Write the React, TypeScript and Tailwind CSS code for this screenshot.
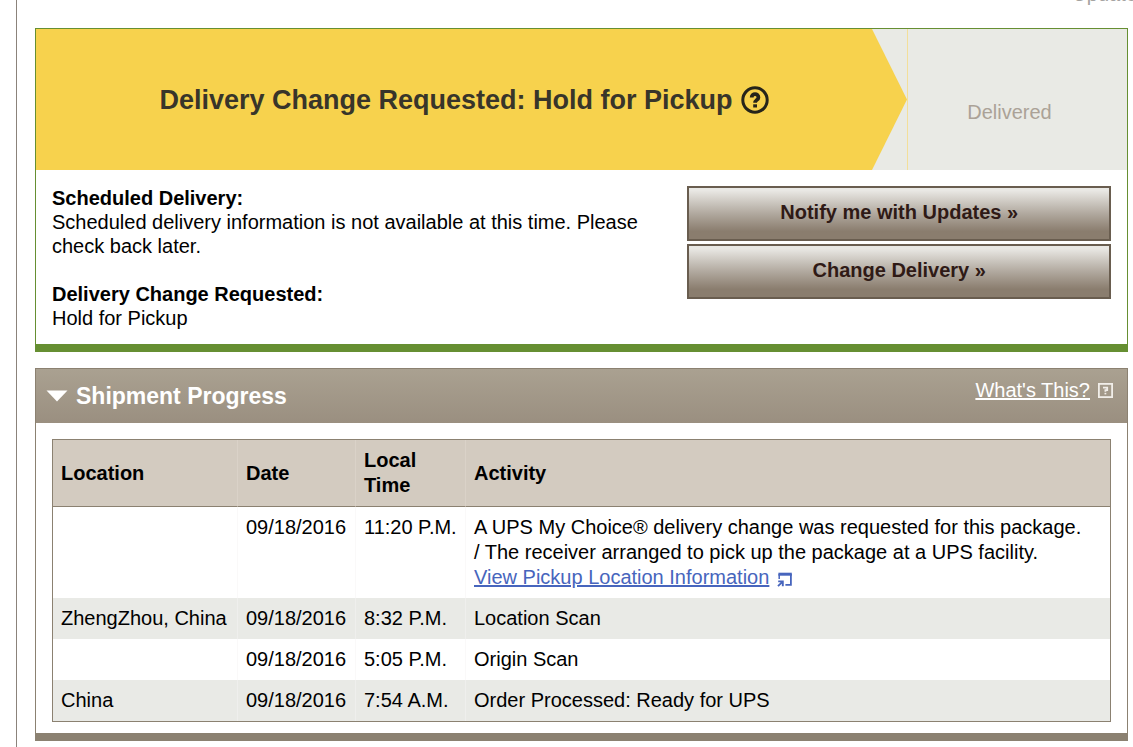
type Scan = {
  location: string;
  date: string;
  time: string;
  activity: string[];
  link?: string;
};

const scans: Scan[] = [
  {
    location: '',
    date: '09/18/2016',
    time: '11:20 P.M.',
    activity: [
      'A UPS My Choice® delivery change was requested for this package.',
      '/ The receiver arranged to pick up the package at a UPS facility.',
    ],
    link: 'View Pickup Location Information',
  },
  { location: 'ZhengZhou, China', date: '09/18/2016', time: '8:32 P.M.', activity: ['Location Scan'] },
  { location: '', date: '09/18/2016', time: '5:05 P.M.', activity: ['Origin Scan'] },
  { location: 'China', date: '09/18/2016', time: '7:54 A.M.', activity: ['Order Processed: Ready for UPS'] },
];

function HelpCircle() {
  return (
    <svg viewBox="0 0 28 28" className="size-7" fill="none" stroke="#26241a" aria-hidden="true">
      <circle cx="14" cy="14" r="12.2" strokeWidth="3" />
      <path d="M10.7 11.4c0-4.4 6.7-4.4 6.7 0 0 2.5-3.3 2.5-3.3 5.4" strokeWidth="3.8" />
      <path d="M12.2 18.3h3.8v3.2h-3.8z" fill="#26241a" stroke="none" />
    </svg>
  );
}

function HelpSquare() {
  return (
    <svg viewBox="0 0 15 15" className="size-[15px]" fill="none" stroke="#f1eee9" aria-hidden="true">
      <rect x="0.9" y="0.9" width="13.2" height="13.2" strokeWidth="1.8" />
      <path d="M5 4.6h4.2v2.6H7.4v1.6" strokeWidth="1.8" />
      <path d="M6.5 9.8h1.8v1.6H6.5z" fill="#f1eee9" stroke="none" />
    </svg>
  );
}

function NewWindow() {
  return (
    <svg viewBox="0 0 15 15" className="ml-2 inline-block size-[15px] align-[-3px]" fill="none" stroke="#4765bd" aria-hidden="true">
      <path d="M2.2 7V2" strokeWidth="1.5" />
      <path d="M1.4 2.2h13.4" strokeWidth="3" />
      <path d="M13.9 2v10.9H8.4" strokeWidth="1.8" />
      <path d="M1 14.2l4.4-4.4M1.2 9.4h4.6v4.8" strokeWidth="1.9" />
    </svg>
  );
}

function ActionButton({ label }: { label: string }) {
  return (
    <button
      type="button"
      className="h-[55px] w-full border-2 border-[#695d4f] bg-linear-to-b from-[#e9e8e4] from-5% via-[#b1a99f] via-50% to-[#8a7d6e] to-85% pb-1 font-bold text-[#2f1a16]"
    >
      {label}
    </button>
  );
}

export default function App() {
  return (
    <div className="overflow-hidden bg-white pl-4 font-['Liberation_Sans',Arial,sans-serif] text-[20px] leading-6 text-black">
      <main className="border-l border-[#8b837b] pb-1.5 pl-[18px] pr-[5px]">
        <div className="flex h-7 justify-end text-[#a5a3a1]">
          <span className="-mr-5 -mt-[18px]">Updated</span>
        </div>

        <section className="border border-b-8 border-[#668f32]">
          <div className="flex h-[141px] bg-[#e9eae5]">
            <div className="flex flex-1 items-center justify-center gap-2 bg-[#f7d24d] pl-5">
              <h1 className="text-[27px] font-bold leading-8 text-[#38352a]">
                Delivery Change Requested: Hold for Pickup
              </h1>
              <button type="button" aria-label="Help">
                <HelpCircle />
              </button>
            </div>
            <svg viewBox="0 0 35 142" preserveAspectRatio="none" className="h-full w-[35px]" aria-hidden="true">
              <path d="M0 0L35 71L0 142Z" fill="#f7d24d" />
            </svg>
            <div className="flex w-[220px] items-center justify-center border-l border-[#f3df9a] pr-4 pt-6 text-[#aba297]">
              Delivered
            </div>
          </div>

          <div className="flex items-start justify-between gap-6 px-4 pb-3.5 pt-4">
            <div className="flex-1">
              <h2 className="font-bold">Scheduled Delivery:</h2>
              <p>Scheduled delivery information is not available at this time. Please check back later.</p>
              <h2 className="mt-6 font-bold">Delivery Change Requested:</h2>
              <p>Hold for Pickup</p>
            </div>
            <div className="flex w-[40%] flex-col gap-[3px]">
              <ActionButton label="Notify me with Updates »" />
              <ActionButton label="Change Delivery »" />
            </div>
          </div>
        </section>

        <section className="mt-4 border border-b-8 border-[#8b8171]">
          <header className="flex h-[54px] items-center justify-between bg-linear-to-b from-[#aaa191] to-[#9a8f80] pl-2.5 pr-3.5 text-white">
            <button type="button" aria-expanded="true" className="flex items-center gap-2 text-[23px] font-bold">
              <svg viewBox="0 0 22 12" className="h-3 w-[22px]" aria-hidden="true">
                <path d="M0.5 0.5h21L11 11.5z" fill="#fff" />
              </svg>
              Shipment Progress
            </button>
            <a href="#whats-this" className="flex items-center gap-2 pb-3">
              <span className="underline">What's This?</span>
              <HelpSquare />
            </a>
          </header>

          <div className="px-4 pb-[11px] pt-4">
            <table className="w-full border-separate border-spacing-0 border border-[#8b8171] text-left leading-[25px]">
              <thead className="bg-[#d3cbc0]">
                <tr>
                  <th className="w-[185px] border-b border-r border-b-[#8b8171] border-r-[#dad2c8] p-2">Location</th>
                  <th className="w-[118px] border-b border-r border-b-[#8b8171] border-r-[#dad2c8] p-2">Date</th>
                  <th className="w-[110px] border-b border-r border-b-[#8b8171] border-r-[#dad2c8] p-2">Local<br />Time</th>
                  <th className="border-b border-[#8b8171] p-2">Activity</th>
                </tr>
              </thead>
              <tbody>
                {scans.map((scan) => (
                  <tr key={scan.time} className="align-top odd:bg-white even:bg-[#e9eae6]">
                    <td className="whitespace-nowrap border-r border-[#f5f4f3]/50 p-2">{scan.location}</td>
                    <td className="whitespace-nowrap border-r border-[#f5f4f3]/50 p-2">{scan.date}</td>
                    <td className="whitespace-nowrap border-r border-[#f5f4f3]/50 py-2 pl-2">{scan.time}</td>
                    <td className="p-2">
                      {scan.activity.map((line) => (
                        <p key={line}>{line}</p>
                      ))}
                      {scan.link && (
                        <a href="#pickup-location" className="block text-[#4765bd]">
                          <span className="underline">{scan.link}</span>
                          <NewWindow />
                        </a>
                      )}
                    </td>
                  </tr>
                ))}
              </tbody>
            </table>
          </div>
        </section>
      </main>
    </div>
  );
}
